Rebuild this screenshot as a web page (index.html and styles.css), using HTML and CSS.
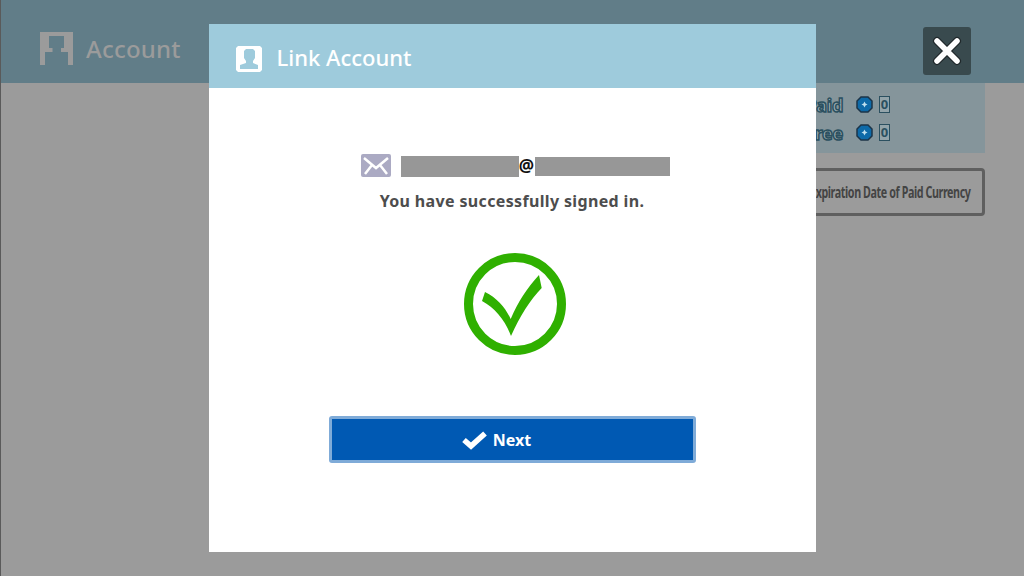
FILE: index.html
```html
<!DOCTYPE html>
<html lang="en">

<head>
    <meta charset="UTF-8">
    <meta name="viewport" content="width=device-width, initial-scale=1.0">
    <title>Link Account</title>

    <link rel="stylesheet" href="styles.css">
</head>

<body>
    <header class="page-head">
        <div class="page-title">
            <svg class="page-icon" viewBox="0 0 33 33" width="33" height="33">
                <path fill="#9b9b9b" fill-rule="evenodd" d="M0 0H33V33H28V20H21V16H24V4H9V16H12.500V20H5V33H0Z"/>
            </svg>
            <span>Account</span>
        </div>
        <button class="close-btn">
            <svg viewBox="0 0 32 32" width="32" height="32">
                <path d="M6 6L26 26M26 6L6 26" stroke="#20282b" stroke-width="8" stroke-linecap="round"/>
                <path d="M6 6L26 26M26 6L6 26" stroke="#fff" stroke-width="5.500" stroke-linecap="round"/>
            </svg>
        </button>
    </header>

    <main class="page-body">
        <section class="currency">
            <div class="currency-row">
                <span class="currency-name">Paid</span>
                <svg class="gem" viewBox="0 0 17 17" width="17" height="17">
                    <path fill="#0e6aa8" stroke="#1c3448" stroke-width="1.500" d="M5 1H12L16 5V12L12 16H5L1 12V5Z"/>
                    <path fill="#bfe0ee" d="M8.500 5.500L9.500 7.500L11.500 8.500L9.500 9.500L8.500 11.500L7.500 9.500L5.500 8.500L7.500 7.500Z"/>
                </svg>
                <span class="amount">0</span>
            </div>
            <div class="currency-row">
                <span class="currency-name">Free</span>
                <svg class="gem" viewBox="0 0 17 17" width="17" height="17">
                    <path fill="#0e6aa8" stroke="#1c3448" stroke-width="1.500" d="M5 1H12L16 5V12L12 16H5L1 12V5Z"/>
                    <path fill="#bfe0ee" d="M8.500 5.500L9.500 7.500L11.500 8.500L9.500 9.500L8.500 11.500L7.500 9.500L5.500 8.500L7.500 7.500Z"/>
                </svg>
                <span class="amount">0</span>
            </div>
        </section>
        <button class="expiry-btn"><span class="expiry-label">Expiration Date of Paid Currency</span></button>
    </main>

    <div class="overlay">
        <section class="modal">
            <div class="modal-head">
                <svg viewBox="0 0 26 26" width="26" height="26">
                    <path fill="#fff" fill-rule="evenodd" d="M2 0H24L26 2V24L24 26H2L0 24V2ZM10 3L8 5V12L10 15V17L4 19V23H22V19L17 17V15L19 12V5L17 3Z"/>
                </svg>
                <h1>Link Account</h1>
            </div>
            <div class="modal-body">
                <div class="email">
                    <svg class="mail-icon" viewBox="0 0 30 23" width="30" height="23">
                        <rect width="30" height="23" rx="2" fill="#abaac3"/>
                        <path d="M3 4L15 14L27 4M4 20L11 11M26 20L19 11" fill="none" stroke="#fff" stroke-width="2.500"/>
                    </svg>
                    <span class="redact redact-name"></span>
                    <span class="at">@</span>
                    <span class="redact redact-domain"></span>
                </div>
                <p class="message">You have successfully signed in.</p>
                <svg class="ok-icon" viewBox="0 0 104 104" width="104" height="104">
                    <circle cx="52" cy="52" r="46.500" fill="none" stroke="#2fb000" stroke-width="9"/>
                    <path fill="#2fb000" d="M22 40C34 46 42 55 47.700 67C55 50 64 36 76 23L78.700 36C67 48 57 64 48 84C42 68 32 56 19 49Z"/>
                </svg>
                <button class="next-btn">
                    <svg viewBox="0 0 26 20" width="26" height="20">
                        <path d="M3 10L10 16L24 3.500" fill="none" stroke="#fff" stroke-width="5.500"/>
                    </svg>
                    <span>Next</span>
                </button>
            </div>
        </section>
    </div>
</body>

</html>
```

FILE: styles.css
```css
* {
    padding: 0;
    margin: 0;
    box-sizing: border-box;
    font-family: "Noto Sans", "Open Sans", sans-serif;
}

body {
    width: 1024px;
    height: 576px;
    overflow: hidden;
    background-color: #9b9b9b;
    border-left: 1px solid #5a5a5a;
    display: flex;
    flex-direction: column;
}

.page-head {
    height: 83px;
    flex: none;
    background-color: #617d88;
    display: flex;
    align-items: center;
    justify-content: space-between;
    padding: 0 53px 0 39px;
}

.page-title {
    display: flex;
    align-items: center;
    gap: 13px;
    color: #9b9b9b;
    font-size: 24px;
    font-weight: 500;
    letter-spacing: 0.2px;
    margin-top: 14px;
}

.close-btn {
    width: 48px;
    height: 48px;
    margin-top: 19px;
    border: none;
    border-radius: 3px;
    background-color: #394a4e;
    display: flex;
    align-items: center;
    justify-content: center;
}

.page-body {
    display: flex;
    flex-direction: column;
    align-items: flex-end;
    gap: 15px;
    padding-right: 39px;
}

.currency {
    width: 400px;
    height: 70px;
    background-color: #85959b;
    padding: 10px 95px 0 0;
    display: flex;
    flex-direction: column;
    gap: 5px;
}

.currency-row {
    display: flex;
    justify-content: flex-end;
    align-items: center;
    gap: 6px;
    height: 23px;
}

.currency-name {
    font-size: 18px;
    font-weight: 700;
    letter-spacing: -0.3px;
    color: #9dacb1;
    -webkit-text-stroke: 1.500px #2b5060;
    margin-right: 7px;
}

.amount {
    width: 11px;
    height: 17px;
    border: 1px solid #2b5060;
    background-color: #93a4aa;
    color: #2b5060;
    font-size: 13px;
    font-weight: 700;
    line-height: 15px;
    text-align: center;
}

.expiry-btn {
    width: 400px;
    height: 48px;
    border: 3px solid #5f5f5f;
    border-radius: 4px;
    background-color: #9b9b9b;
    color: #444;
    font-size: 16px;
    font-weight: 700;
    text-align: right;
    padding-right: 12px;
}

.expiry-label {
    display: inline-block;
    white-space: nowrap;
    letter-spacing: -0.6px;
    transform: scaleX(0.67);
    transform-origin: right center;
}

.overlay {
    position: absolute;
    top: 0;
    left: 0;
    width: 100%;
    height: 100%;
    display: flex;
    align-items: center;
    justify-content: center;
}

.modal {
    width: 607px;
    height: 528px;
    background-color: #fff;
    display: flex;
    flex-direction: column;
}

.modal-head {
    height: 64px;
    flex: none;
    background-color: #9ecbdc;
    display: flex;
    align-items: center;
    gap: 15px;
    padding: 5px 0 0 27px;
    color: #fff;
}

.modal-head h1 {
    font-size: 22px;
    font-weight: 500;
    margin-bottom: 4px;
}

.modal-body {
    flex: 1;
    display: flex;
    flex-direction: column;
    align-items: center;
    padding-top: 65px;
}

.email {
    display: flex;
    align-items: center;
    height: 24px;
    color: #111;
    font-size: 17px;
    font-weight: 700;
    margin-left: 6px;
}

.mail-icon {
    margin-right: 10px;
}

.redact {
    display: block;
    background-color: #979797;
}

.redact-name {
    width: 118px;
    height: 21px;
    margin-top: 3px;
}

.redact-domain {
    width: 135px;
    height: 19px;
    margin-top: 3px;
}

.at {
    width: 16px;
    margin-top: 1px;
    text-align: center;
}

.message {
    margin-top: 13px;
    color: #4d4d4d;
    font-size: 16px;
    font-weight: 700;
    letter-spacing: 0.35px;
}

.ok-icon {
    margin-top: 40px;
    margin-left: 5px;
}

.next-btn {
    margin-top: 60px;
    width: 367px;
    height: 47px;
    border: 3px solid #7fabd8;
    border-radius: 3px;
    background-color: #0059b3;
    color: #fff;
    font-size: 16px;
    font-weight: 700;
    padding-right: 32px;
    display: flex;
    align-items: center;
    justify-content: center;
    gap: 6px;
}
```
